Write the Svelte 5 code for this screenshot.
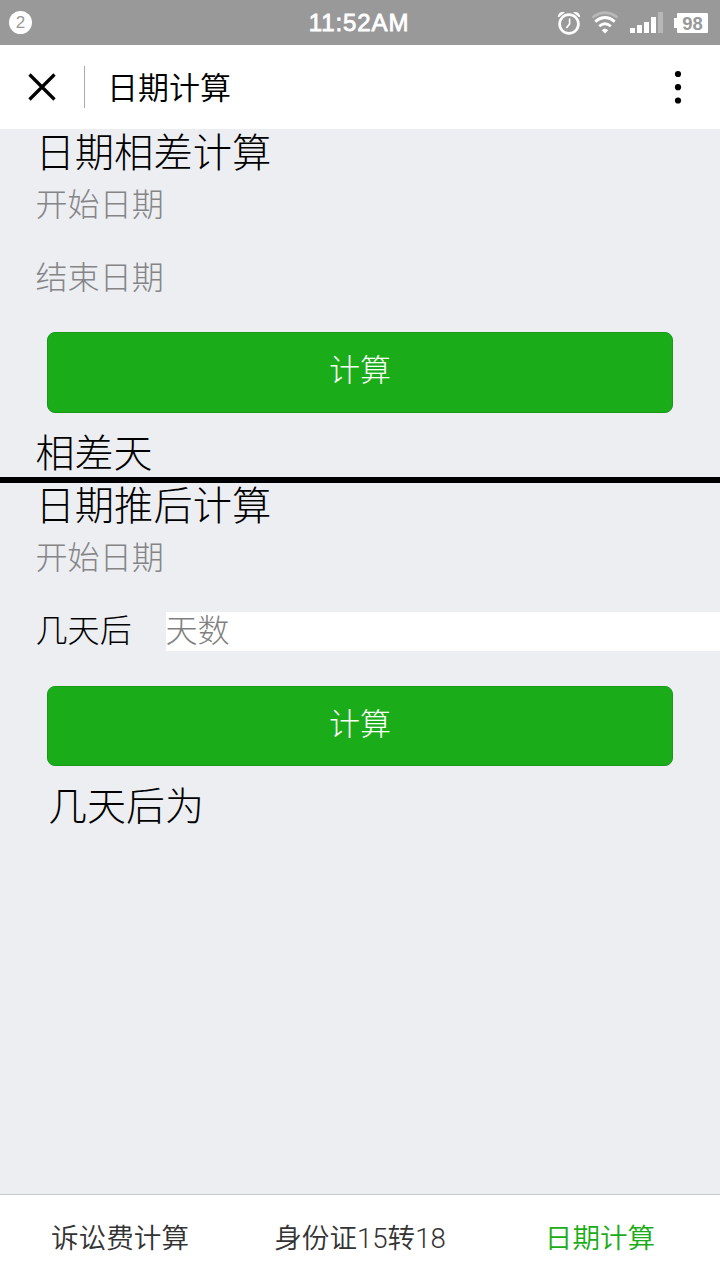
<script>
  let days = $state('');
  const tabs = ['诉讼费计算', '身份证15转18', '日期计算'];
  let active = $state(2);
</script>

<div class="screen">
  <header class="status">
    <div class="side"><span class="badge">2</span></div>
    <span class="time">11:52AM</span>
    <div class="side right">
      <svg class="alarm" width="24" height="26" viewBox="0 0 24 26" fill="none" stroke="#fff">
        <circle cx="12" cy="14" r="9.4" stroke-width="2.7" />
        <path d="M12.6 8.5V14l-3.2 4" stroke-width="1.7" />
        <path d="M0.8 6.8 Q1.5 1 8 2.2 L1.8 7.2Z M23.2 6.8 Q22.5 1 16 2.2 L22.2 7.2Z" fill="#fff" stroke="none" />
      </svg>
      <svg class="wifi" width="28" height="24" viewBox="0 0 28 24" fill="none" stroke="#fff" stroke-width="2.8">
        <path d="M1.5 6.5 Q14 -3 26.5 6.5" opacity=".3" />
        <path d="M4.2 10.6 Q14 2.4 23.8 10.6" />
        <path d="M8.2 15.2 Q14 10.2 19.8 15.2" />
        <path d="M14 22.6 L10.8 19.2 Q14 15.8 17.2 19.2Z" fill="#fff" stroke="none" />
      </svg>
      <svg class="signal" width="34" height="22" viewBox="0 0 34 22" fill="#fff">
        <rect x="0" y="16" width="5" height="5" />
        <rect x="7" y="13" width="5" height="8" />
        <rect x="14" y="10" width="5" height="11" />
        <rect x="21" y="5" width="5" height="16" />
        <rect x="28" y="0" width="5" height="21" opacity=".3" />
      </svg>
      <span class="battery">98</span>
    </div>
  </header>

  <nav class="bar">
    <svg width="28" height="28" viewBox="0 0 28 28" stroke="#000" stroke-width="3.2">
      <path d="M1.5 1.5 26.5 26.5M26.5 1.5 1.5 26.5" />
    </svg>
    <i class="divider"></i>
    <span class="title">日期计算</span>
    <svg class="more" width="8" height="34" viewBox="0 0 8 34">
      <circle cx="4" cy="4" r="3.1" /><circle cx="4" cy="17.2" r="3.1" /><circle cx="4" cy="30.5" r="3.1" />
    </svg>
  </nav>

  <main>
    <section>
      <h2>日期相差计算</h2>
      <div class="row hint">开始日期</div>
      <div class="row hint">结束日期</div>
      <button>计算</button>
      <div class="result">相差天</div>
    </section>
    <section class="second">
      <h2>日期推后计算</h2>
      <div class="row hint">开始日期</div>
      <div class="row"><label for="days">几天后</label><input id="days" placeholder="天数" bind:value={days} /></div>
      <button>计算</button>
      <div class="result indent">几天后为</div>
    </section>
  </main>

  <footer>
    {#each tabs as tab, i}
      <span class="tab" class:active={i === active}>{tab}</span>
    {/each}
  </footer>
</div>

<style>
  :global(body) { margin: 0; }
  .screen {
    width: 720px; height: 1280px; overflow: hidden;
    display: flex; flex-direction: column;
    background: #eceef2; color: #000;
    font-family: "Noto Sans CJK SC", sans-serif; font-weight: 300;
  }
  .status {
    height: 45px; flex: none; display: flex; align-items: center;
    background: #999; color: #fff;
    font-family: "Liberation Sans", Arial, sans-serif;
  }
  .side { flex: 1 1 0; box-sizing: border-box; display: flex; align-items: center; padding-left: 9px; }
  .right { justify-content: flex-end; padding: 0 12px 0 0; }
  .badge {
    width: 23px; height: 23px; border-radius: 50%; background: #fff; color: #999;
    font-size: 17px; line-height: 23px; text-align: center; font-weight: 400;
  }
  .time {
    padding-left: 1px; font-size: 24px; font-weight: 400; line-height: 46px; letter-spacing: .9px;
    -webkit-text-stroke: .8px #fff;
  }
  .alarm { margin-right: 10px; }
  .wifi { margin-right: 11px; }
  .signal { margin-right: 13px; }
  .battery {
    position: relative; width: 31px; height: 20px; border-radius: 1px;
    background: #fff; color: #999; font-size: 18.5px; line-height: 21px; font-weight: 700; text-align: center;
  }
  .battery::before {
    content: ""; position: absolute; left: -3px; top: 5px; width: 3px; height: 10px; background: #fff;
  }
  .bar {
    height: 84px; flex: none; box-sizing: border-box; padding: 0 38px 0 28px;
    display: flex; align-items: center; background: #fff;
  }
  .divider { width: 1px; height: 42px; margin: 0 22px 0 28px; background: #aaa; }
  .title { font-size: 31px; line-height: 82px; height: 84px; font-weight: 350; }
  .more { margin-left: auto; }
  main { flex: 1; }
  h2 {
    margin: 0 0 8px; padding-left: 35.5px; height: 49px;
    font-size: 39.3px; line-height: 42px; font-weight: 300;
  }
  .second h2 { height: 48px; line-height: 40px; }
  .row {
    display: flex; height: 39px; margin-bottom: 34px; padding-left: 35.5px;
    font-size: 32.1px; line-height: 33px;
  }
  .hint { color: #858587; }
  label { width: 130px; }
  input {
    flex: 1; min-width: 0; height: 39px; box-sizing: border-box; padding: 0 0 7px; border: 0; outline: 0;
    background: #fff; font: inherit; line-height: 32px;
  }
  input::placeholder { color: #808080; opacity: 1; }
  button {
    display: block; width: 626px; height: 81px; margin: 0 47px; padding: 0 0 10px;
    border: 1px solid #189a18; border-radius: 8px;
    background: #1aad19; color: #fff; font: inherit; font-size: 31px;
  }
  .second button { height: 80px; margin-top: 35px; }
  .result { height: 64px; padding-left: 35.5px; font-size: 39px; line-height: 74px; }
  .indent { padding-left: 48px; }
  .second { border-top: 6px solid #000; }
  footer {
    height: 86px; flex: none; box-sizing: border-box; display: flex;
    background: #fff; border-top: 1px solid #c8c8ce;
  }
  .tab {
    flex: 1; text-align: center; font-family: Roboto, "Noto Sans CJK SC", sans-serif;
    font-size: 27.6px; line-height: 88px; color: #333; font-weight: 350;
  }
  .active { color: #1aad19; }
</style>
